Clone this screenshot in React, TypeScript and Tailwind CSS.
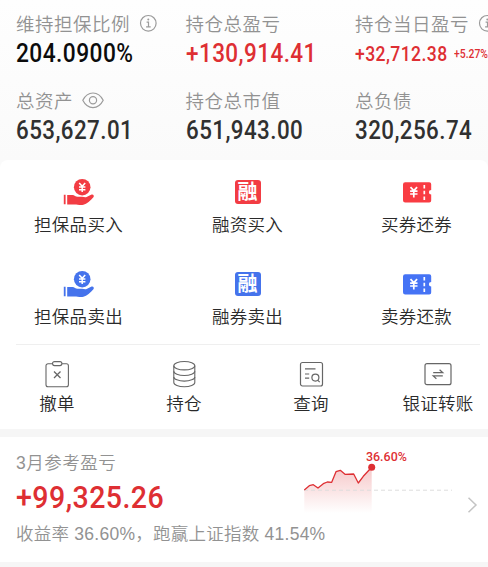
import clsx from "clsx";

const cjk = "font-['Noto_Sans_CJK_SC',sans-serif]";
const din = "font-['Roboto','Noto_Sans_CJK_SC',sans-serif]";
const arial = "font-['Liberation_Sans','Noto_Sans_CJK_SC',sans-serif]";

function InfoIcon() {
  return (
    <svg width="18" height="18" viewBox="0 0 18 18" fill="none" stroke="#9b9b9b" strokeWidth="1.2" className="shrink-0">
      <circle cx="9.3" cy="9.3" r="7.8" />
      <path d="M7.6 8.2h1.9v4.6M7.1 12.9h4.6" />
      <circle cx="9.3" cy="5.5" r="1" fill="#9b9b9b" stroke="none" />
    </svg>
  );
}

function EyeIcon() {
  return (
    <svg width="22" height="18" viewBox="0 0 22 18" fill="none" stroke="#9b9b9b" strokeWidth="1.2" className="shrink-0">
      <path d="M.8 9.3C3.2 4.5 6.8 2 11 2s7.800 2.500 10.200 7.300c-2.400 4.800-6 7.300-10.200 7.300S3.200 14.100.8 9.300z" />
      <circle cx="11" cy="9.3" r="3.6" />
    </svg>
  );
}

function HandIcon() {
  return (
    <svg width="32" height="28" viewBox="0 0 32 28" fill="currentColor">
      <circle cx="19.2" cy="9.2" r="8.3" />
      <path d="M16.2 4.900l3 3.400 3-3.400M16 8.900h6.400M16 11.700h6.400M19.200 8.300v5.600" fill="none" stroke="#fff" strokeWidth="1.5" />
      <path d="M.8 16.800h1.800v9.500H.8zM4.200 17h5.300c2 0 3 1.800 5 1.800H19c1.800 0 3 .9 4.600.2l4.500-2.300c2-.9 3.600.9 2.300 2.500-3 3.300-6.500 6.500-10 7.600-3.200.8-6-.4-9-.4H4.200z" />
    </svg>
  );
}

function TicketIcon() {
  return (
    <svg width="30" height="28" viewBox="0 0 30 28" fill="currentColor">
      <path d="M3.2 4.300h24a2 2 0 0 1 2 2v5.700a2.300 2.300 0 0 0 0 4.600v5.800a2 2 0 0 1-2 2h-24a2.200 2.200 0 0 1-2.200-2.200V6.500a2.200 2.200 0 0 1 2.200-2.200z" />
      <path d="M8.500 9.200l3.300 3.500 3.300-3.500M8.100 13.100h7.400M8.100 16h7.400M11.800 12.500v7" fill="none" stroke="#fff" strokeWidth="1.7" />
      <path d="M22.300 7v3.500M22.300 12.700v3.500M22.300 18.400v3.600" stroke="#fff" strokeWidth="1.7" />
    </svg>
  );
}

function RongIcon() {
  return (
    <span className="flex h-6 w-[26px] items-center justify-center rounded-[3px] bg-current pb-[3px] text-[20px] leading-none font-bold">
      <span className="text-white">融</span>
    </span>
  );
}

function CancelIcon() {
  return (
    <svg width="28" height="28" viewBox="0 0 28 28" fill="none" stroke="#666" strokeWidth="1.1">
      <path d="M9.500 3.700H5a2 2 0 0 0-2 2v19a2 2 0 0 0 2 2h18.400a2 2 0 0 0 2-2v-19a2 2 0 0 0-2-2h-4.500" />
      <rect x="9.5" y="1.6" width="9.4" height="4" rx="2" />
      <path d="M11 11.500l6.500 6.500M17.500 11.500L11 18" strokeWidth="1.3" />
    </svg>
  );
}

function StackIcon() {
  return (
    <svg width="28" height="28" viewBox="0 0 28 28" fill="none" stroke="#666" strokeWidth="1.1">
      <ellipse cx="14.3" cy="5.7" rx="10.5" ry="4.2" />
      <path d="M3.800 5.700v16.800c0 2.300 4.700 4.200 10.500 4.200s10.500-1.900 10.500-4.200V5.700" />
      <path d="M3.800 11.300c0 2.300 4.700 4.200 10.500 4.200s10.500-1.900 10.500-4.200M3.800 16.900c0 2.300 4.700 4.200 10.500 4.200s10.500-1.900 10.500-4.200" />
    </svg>
  );
}

function QueryIcon() {
  return (
    <svg width="28" height="28" viewBox="0 0 28 28" fill="none" stroke="#666" strokeWidth="1.2">
      <rect x="3.5" y="2.5" width="22" height="23.5" rx="2" />
      <path d="M8 8.800h10.500M8 14h4.200M8 18.200h4.200M20.900 20.300l1.800 1.800" />
      <circle cx="18.4" cy="17.6" r="3.5" />
    </svg>
  );
}

function TransferIcon() {
  return (
    <svg width="28" height="28" viewBox="0 0 28 28" fill="none" stroke="#666" strokeWidth="1.2">
      <rect x="1" y="3.7" width="26" height="21" rx="2" />
      <path d="M9.200 12.700h9.600l-3.200-2.900M18.800 15.900H9.200l3.200 2.900" />
    </svg>
  );
}

const stats = [
  { label: "维持担保比例", value: "204.0900%", icon: <InfoIcon />, color: "text-[#0c0c0c]", size: "text-[26px] scale-x-[0.875]" },
  { label: "持仓总盈亏", value: "+130,914.41", color: "text-[#de2f33]", size: "text-[26px] scale-x-[0.865]" },
  { label: "持仓当日盈亏", value: "+32,712.38", extra: "+5.27%", icon: <InfoIcon />, color: "text-[#de2f33]", size: "text-[20.5px] scale-x-[0.855] pt-0.5" },
  { label: "总资产", value: "653,627.01", icon: <EyeIcon />, color: "text-[#303030]", size: "text-[26px] scale-x-[0.86]" },
  { label: "持仓总市值", value: "651,943.00", color: "text-[#303030]", size: "text-[26px] scale-x-[0.86]" },
  { label: "总负债", value: "320,256.74", color: "text-[#303030]", size: "text-[26px] scale-x-[0.86]" },
];

const trades = [
  { label: "担保品买入", icon: <HandIcon />, color: "text-[#f23c43]" },
  { label: "融资买入", icon: <RongIcon />, color: "text-[#f23c43]" },
  { label: "买券还券", icon: <TicketIcon />, color: "text-[#f93c43]" },
  { label: "担保品卖出", icon: <HandIcon />, color: "text-[#4573ec]" },
  { label: "融券卖出", icon: <RongIcon />, color: "text-[#4573ec]" },
  { label: "卖券还款", icon: <TicketIcon />, color: "text-[#4573f5]" },
];

const tools = [
  { label: "撤单", icon: <CancelIcon /> },
  { label: "持仓", icon: <StackIcon /> },
  { label: "查询", icon: <QueryIcon /> },
  { label: "银证转账", icon: <TransferIcon /> },
];

const line = "M1.3 30L6.3 25.7L10.3 24.7L15 28L20.3 23.7L24.3 22L28.7 22.3L33 11.7L37.3 10.3L42 14.3L50.7 14L55.3 23L60.3 16.3L68.7 7.3";

export default function App() {
  return (
    <div className={clsx(cjk, "h-[567px] w-[488px] overflow-hidden bg-[#f6f6f6] whitespace-nowrap")}>
      {/* Account summary */}
      <header className="grid h-[160px] grid-cols-[169.5px_169.5px_133px] content-start gap-y-[17px] bg-linear-to-b from-[#fefefe] to-[#fafafa] pt-[11px] pl-4">
        {stats.map((s) => (
          <div key={s.label}>
            <div className="flex h-6 items-center gap-[9px] text-[18.5px] leading-6 font-[350] tracking-[0.5px] text-[#929292]">
              {s.label}
              {s.icon}
            </div>
            <div className={clsx(din, "flex h-9 items-center font-medium", s.color)}>
              <span className={clsx("origin-left tracking-[0.5px]", s.size)}>{s.value}</span>
              {s.extra && (
                <span className="-ml-[9px] w-[34px] origin-left scale-x-[0.83] pt-0.5 text-[12.5px]">{s.extra}</span>
              )}
            </div>
          </div>
        ))}
      </header>

      {/* Trading actions */}
      <section className="h-[269px] bg-[#fafafa]">
        <div className="h-full rounded-t-lg bg-white pt-[18px]">
          <div className="-ml-1.5 grid w-[507px] grid-cols-3 gap-y-[34px]">
            {trades.map((t) => (
              <div key={t.label} className="flex flex-col items-center gap-1.5">
                <div className={clsx("flex h-7 items-center", t.color)}>{t.icon}</div>
                <div className="h-6 text-[17.5px] leading-6 font-[350] tracking-[0.3px] text-[#2a2a2a]">{t.label}</div>
              </div>
            ))}
          </div>
          <div className="mt-4 mr-2 ml-4 h-px bg-[#efefef]" />
          <div className="-ml-[6.5px] grid w-[508px] grid-cols-4 pt-[15px]">
            {tools.map((t) => (
              <div key={t.label} className="flex flex-col items-center gap-[3px]">
                {t.icon}
                <div className="h-6 text-[17.5px] leading-6 font-[350] tracking-[0.3px] text-[#2a2a2a]">{t.label}</div>
              </div>
            ))}
          </div>
        </div>
      </section>

      {/* Monthly profit */}
      <section className="mt-2 flex h-[125px] bg-white pl-4">
        <div className={clsx(arial, "w-[287px] pt-3.5 font-[350] text-[#929292]")}>
          <div className="h-6 text-[17.5px] leading-6 tracking-[0.5px]">3月参考盈亏</div>
          <div className={clsx(din, "flex h-[47px] items-center font-medium text-[#de2f33]")}>
            <span className="origin-left scale-x-[0.92] text-[31px] tracking-[0.5px]">+99,325.26</span>
          </div>
          <div className="h-6 text-[17.5px] leading-6 tracking-[0.25px]">收益率 36.60%，跑赢上证指数 41.54%</div>
        </div>
        <div className="w-[150px] pt-3">
          <div className={clsx(din, "h-[11px] pl-[63px] text-[13.5px] leading-[14px] font-medium text-[#de2f33]")}>
            <span className="inline-block origin-left scale-x-[0.92]">36.60%</span>
          </div>
          <svg width="150" height="56" viewBox="0 0 150 56" fill="none">
            <defs>
              <linearGradient id="area" x1="0" y1="8" x2="0" y2="53" gradientUnits="userSpaceOnUse">
                <stop stopColor="#de2f33" stopOpacity="0.26" />
                <stop offset="1" stopColor="#de2f33" stopOpacity="0" />
              </linearGradient>
            </defs>
            <path d={`${line}V53H1.3Z`} fill="url(#area)" />
            <path d="M1 30.2H149" stroke="#ddd" strokeDasharray="4 3" />
            <path d={line} stroke="#de2f33" strokeWidth="1.3" strokeLinejoin="round" />
            <circle cx="68.7" cy="7.3" r="3.5" fill="#de2f33" />
          </svg>
        </div>
        <svg width="12" height="18" viewBox="0 0 12 18" fill="none" stroke="#c4c4c4" strokeWidth="1.5" className="mt-[59px] ml-[13px]">
          <path d="M2.5 1.8L10 9L2.5 16.2" />
        </svg>
      </section>
    </div>
  );
}
